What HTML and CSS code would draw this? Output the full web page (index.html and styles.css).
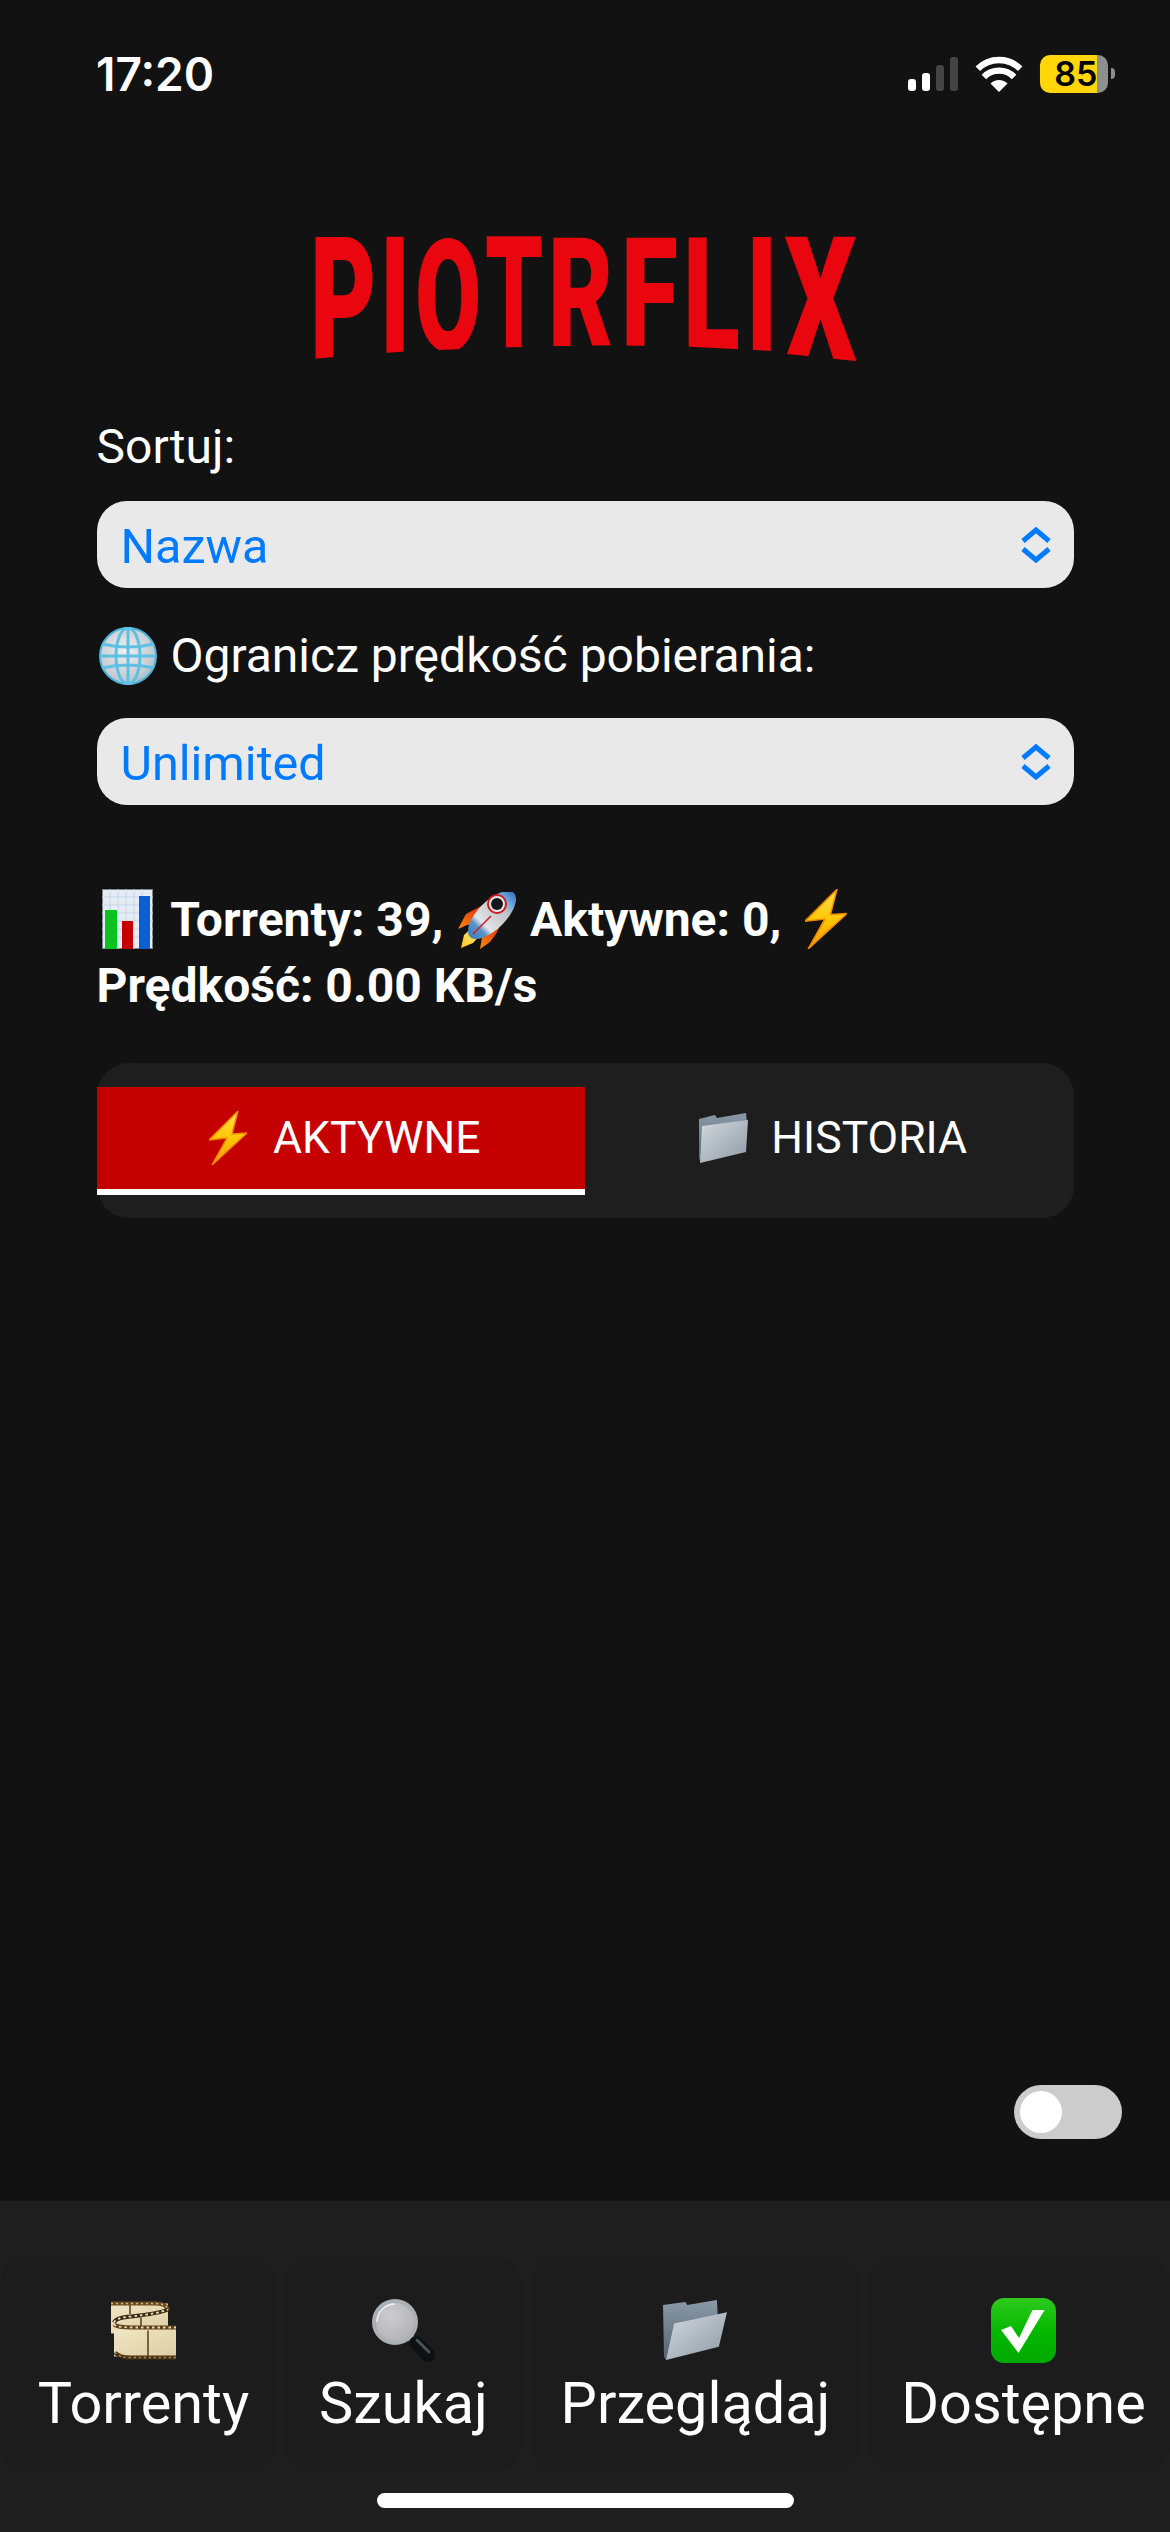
FILE: index.html
```html
<!DOCTYPE html>
<html lang="pl">
<head>
<meta charset="utf-8">
<link rel="stylesheet" href="styles.css">
<title>Piotrflix</title>
</head>
<body>

<!-- emoji sprites -->
<svg class="sprite" xmlns="http://www.w3.org/2000/svg">
  <defs>
    <linearGradient id="g-bolt" x1="0" y1="0" x2="0" y2="1">
      <stop offset="0" stop-color="#ffe14a"/><stop offset="0.55" stop-color="#ffc400"/><stop offset="1" stop-color="#f59a00"/>
    </linearGradient>
    <linearGradient id="g-folder-back" x1="0" y1="0" x2="0" y2="1">
      <stop offset="0" stop-color="#8b9aa8"/><stop offset="1" stop-color="#55636f"/>
    </linearGradient>
    <linearGradient id="g-folder-front" x1="0" y1="0" x2="1" y2="1">
      <stop offset="0" stop-color="#d3d9de"/><stop offset="1" stop-color="#8e9aa6"/>
    </linearGradient>
    <linearGradient id="g-check" x1="0" y1="0" x2="0" y2="1">
      <stop offset="0" stop-color="#2ecb1e"/><stop offset="0.5" stop-color="#05b800"/><stop offset="1" stop-color="#02a800"/>
    </linearGradient>
    <linearGradient id="g-rocket" x1="0" y1="0" x2="1" y2="0">
      <stop offset="0" stop-color="#3f7fc0"/><stop offset="0.2" stop-color="#5b93c8"/><stop offset="0.3" stop-color="#e2e5e8"/><stop offset="0.72" stop-color="#b9c0c6"/><stop offset="0.84" stop-color="#6aa5de"/><stop offset="1" stop-color="#3b78bd"/>
    </linearGradient>
    <linearGradient id="g-fin" x1="1" y1="0" x2="0" y2="1">
      <stop offset="0" stop-color="#d81e0a"/><stop offset="1" stop-color="#ff8a10"/>
    </linearGradient>
    <linearGradient id="g-flame" x1="1" y1="0" x2="0" y2="1">
      <stop offset="0" stop-color="#f58a10"/><stop offset="0.6" stop-color="#ffdc50"/><stop offset="1" stop-color="#ffc020"/>
    </linearGradient>
    <linearGradient id="g-film" x1="0" y1="0" x2="1" y2="1">
      <stop offset="0" stop-color="#f1e6c4"/><stop offset="1" stop-color="#ddcea4"/>
    </linearGradient>
    <radialGradient id="g-globe" cx="0.45" cy="0.4" r="0.7">
      <stop offset="0" stop-color="#eef0f1"/><stop offset="0.7" stop-color="#c5ccd1"/><stop offset="1" stop-color="#8ab2c6"/>
    </radialGradient>
    <radialGradient id="g-lens" cx="0.4" cy="0.35" r="0.8">
      <stop offset="0" stop-color="#cdcdcf"/><stop offset="1" stop-color="#adadaf"/>
    </radialGradient>

    <symbol id="e-chart" viewBox="0 0 51 60">
      <rect x="0.5" y="0.5" width="50" height="59" fill="#e6edf5" stroke="#7d838a"/>
      <path d="M0 8H51M0 16H51M0 24H51M0 32H51M0 40H51M0 48H51M8 0V60M16 0V60M24 0V60M32 0V60M40 0V60" stroke="#c5d6ea" stroke-width="1"/>
      <rect x="3" y="21" width="12" height="39" fill="#0cc21f"/>
      <rect x="20" y="32" width="11" height="28" fill="#c40000"/>
      <rect x="37" y="7" width="11" height="53" fill="#0a5fd0"/>
    </symbol>

    <symbol id="e-rocket" viewBox="0 0 58 57">
      <path d="M0 37 L8 22 L27 12 L20 32 L9 33 Z" fill="url(#g-fin)"/>
      <path d="M22 57 L25 40 L44 30 L38 42 L32 50 Z" fill="url(#g-fin)"/>
      <path d="M3 56 L6 43 L18 32 L25 40 L15 51 Z" fill="url(#g-flame)"/>
      <ellipse cx="34" cy="23" rx="31" ry="14" transform="rotate(-45 34 23)" fill="url(#g-rocket)"/>
      <path d="M15 42 L33 24" stroke="#c8202a" stroke-width="1.6"/>
      <circle cx="39" cy="12" r="9" fill="#e8eaec" stroke="#d01a1e" stroke-width="2"/>
      <circle cx="39" cy="12" r="6" fill="#151618"/>
    </symbol>

    <symbol id="e-bolt" viewBox="0 0 38 54">
      <path d="M29 0 L0 29 L18 27 L3 54 L38 22 L23 23 Z" fill="url(#g-bolt)" stroke="#ee8a00" stroke-width="1.4" stroke-linejoin="round"/>
    </symbol>

    <symbol id="e-globe" viewBox="0 0 58 58">
      <circle cx="29" cy="29" r="28" fill="url(#g-globe)" stroke="#4fb3d9" stroke-width="2"/>
      <g fill="none" stroke="#5fc0e4" stroke-width="3">
        <ellipse cx="29" cy="29" rx="12" ry="28"/>
        <path d="M29 1V57M3 17Q29 23 55 17M1 29H57M3 41Q29 35 55 41"/>
      </g>
    </symbol>

    <symbol id="e-folder-tab" viewBox="0 0 49 50">
      <path d="M0 6 L16 2 L18 5 L47 0 L48 10 L3 49 L0 46 Z" fill="url(#g-folder-back)"/>
      <path d="M3 13 L49 7 L47 39 L1 50 Z" fill="url(#g-folder-front)"/>
    </symbol>

    <symbol id="e-folder" viewBox="0 0 64 60">
      <path d="M0 5 L22 2 L24 5 L53 0 L54 16 L3 59 L1 56 Z" fill="url(#g-folder-back)"/>
      <path d="M11 23 L63 12 L55 46 L3 59 Z" fill="url(#g-folder-front)"/>
    </symbol>

    <symbol id="e-film" viewBox="0 0 65 60">
      <rect x="0" y="3" width="57" height="30" fill="url(#g-film)"/>
      <rect x="3" y="28" width="62" height="28" fill="url(#g-film)"/>
      <path d="M19 3V14M30 17V28M37 30V56" stroke="#4a3213" stroke-width="1.4"/>
      <g fill="none">
        <path d="M0 3 H44 Q56 3 57 10" stroke="#6b4d20" stroke-width="4"/>
        <path d="M0 3 H44 Q56 3 57 10" stroke="#cdbb8c" stroke-width="1.5" stroke-dasharray="2 3"/>
        <path d="M3 22 Q5 17 20 16 Q48 13 57 9" stroke="#3a2a12" stroke-width="4"/>
        <path d="M3 22 Q5 17 20 16 Q48 13 57 9" stroke="#f0e6c4" stroke-width="1.8" stroke-dasharray="2.5 3"/>
        <path d="M3 24 Q6 27 22 27 H65" stroke="#5a4119" stroke-width="4"/>
        <path d="M3 24 Q6 27 22 27 H65" stroke="#e8dcb4" stroke-width="1.8" stroke-dasharray="2.5 3"/>
        <path d="M4 52 Q8 57 20 57 H65" stroke="#4a3414" stroke-width="4"/>
        <path d="M4 52 Q8 57 20 57 H65" stroke="#a68f60" stroke-width="1.5" stroke-dasharray="2 3"/>
      </g>
    </symbol>

    <symbol id="e-search" viewBox="0 0 65 65">
      <path d="M38 38 L50 50" stroke="#8d949a" stroke-width="7"/>
      <path d="M45 45 L57 57" stroke="#0e1114" stroke-width="14" stroke-linecap="round"/>
      <path d="M46 42 L58 54" stroke="#4a5258" stroke-width="3" stroke-linecap="round"/>
      <circle cx="24" cy="24" r="21" fill="url(#g-lens)" stroke="#a9b0b6" stroke-width="4"/>
      <path d="M6 24 A18 18 0 0 1 24 6" fill="none" stroke="#eef0f2" stroke-width="1.5"/>
    </symbol>

    <symbol id="e-check" viewBox="0 0 65 65">
      <rect width="65" height="65" rx="13" fill="url(#g-check)"/>
      <path d="M10 32 L20 28 L28 40 L41.5 12 L53.6 12 L27.5 55 Z" fill="#fff"/>
    </symbol>

    <symbol id="chevrons" viewBox="0 0 32 36">
      <path d="M3 14 L16 3 L29 14M3 22 L16 33 L29 22" fill="none" stroke="#007aff" stroke-width="5"/>
    </symbol>

    <clipPath id="logo-curve">
      <path d="M0 0H560V130L550 129L480 121.7L467 119L435 117.3L385 114.7L320 113.4L240 114.7L180 116L100 119.4L80 121L30 125L0 127.5Z"/>
    </clipPath>
  </defs>
</svg>

<header class="status-bar">
  <span class="status-time">17:20</span>
  <div class="status-icons">
    <div class="signal">
      <span class="bar bar-1"></span>
      <span class="bar bar-2"></span>
      <span class="bar bar-3"></span>
      <span class="bar bar-4"></span>
    </div>
    <svg class="wifi" viewBox="0 0 48 36">
      <path d="M24 36 L15.5 27.5 A12 12 0 0 1 32.5 27.5 Z" fill="#fff"/>
      <path d="M8.9 20.9 A21.4 21.4 0 0 1 39.1 20.9M2.8 12.8 A30 30 0 0 1 45.2 12.8" fill="none" stroke="#fff" stroke-width="6.4"/>
    </svg>
    <div class="battery"><span class="battery-level">85</span></div>
  </div>
</header>

<main class="content">
  <svg class="logo" viewBox="0 0 560 130">
    <g clip-path="url(#logo-curve)">
      <text class="logo-letter" transform="translate(5 127.5) scale(1.02 1.727)">P</text>
      <text class="logo-letter" transform="translate(75 121) scale(1 1.636)">I</text>
      <text class="logo-letter" transform="translate(110 118) scale(0.96 1.55)">O</text>
      <text class="logo-letter" transform="translate(180 115) scale(0.92 1.551)">T</text>
      <text class="logo-letter" transform="translate(243 113.5) scale(1 1.53)">R</text>
      <text class="logo-letter" transform="translate(316 113.5) scale(1.04 1.53)">F</text>
      <text class="logo-letter" transform="translate(378 117.5) scale(1.05 1.586)">L</text>
      <text class="logo-letter" transform="translate(441 120) scale(1.05 1.622)">I</text>
      <text class="logo-letter" transform="translate(479 129) scale(1.14 1.748)">X</text>
    </g>
  </svg>

  <label class="field-label field-label-first">Sortuj:</label>
  <div class="select">
    <span>Nazwa</span>
    <svg class="select-arrows"><use href="#chevrons"/></svg>
  </div>

  <label class="field-label"><svg class="emoji emoji-globe"><use href="#e-globe"/></svg> Ogranicz prędkość pobierania:</label>
  <div class="select">
    <span>Unlimited</span>
    <svg class="select-arrows"><use href="#chevrons"/></svg>
  </div>

  <p class="stats">
    <svg class="emoji emoji-chart"><use href="#e-chart"/></svg> Torrenty: 39, <svg class="emoji emoji-rocket"><use href="#e-rocket"/></svg> Aktywne: 0, <svg class="emoji emoji-bolt"><use href="#e-bolt"/></svg><br>
    Prędkość: 0.00 KB/s
  </p>

  <div class="tabs">
    <div class="tab tab-active">
      <svg class="tab-icon tab-icon-bolt"><use href="#e-bolt"/></svg>
      <span>AKTYWNE</span>
    </div>
    <div class="tab">
      <svg class="tab-icon tab-icon-folder"><use href="#e-folder-tab"/></svg>
      <span>HISTORIA</span>
    </div>
  </div>
</main>

<div class="toggle-row">
  <div class="toggle"><span class="toggle-knob"></span></div>
</div>

<nav class="bottom-nav">
  <div class="nav-items">
    <a class="nav-item"><svg class="nav-icon"><use href="#e-film"/></svg><span>Torrenty</span></a>
    <a class="nav-item"><svg class="nav-icon"><use href="#e-search"/></svg><span>Szukaj</span></a>
    <a class="nav-item"><svg class="nav-icon"><use href="#e-folder"/></svg><span>Przeglądaj</span></a>
    <a class="nav-item"><svg class="nav-icon"><use href="#e-check"/></svg><span>Dostępne</span></a>
  </div>
  <div class="home-indicator"></div>
</nav>

</body>
</html>
```

FILE: styles.css
```css
html, body { margin: 0; padding: 0; }

body {
  width: 1170px;
  height: 2532px;
  overflow: hidden;
  display: flex;
  flex-direction: column;
  background: #121212;
  color: #fff;
  font-family: Roboto, "Noto Sans", sans-serif;
}

.sprite { position: absolute; width: 0; height: 0; }

/* status bar */
.status-bar {
  flex: none;
  height: 148px;
  display: flex;
  align-items: center;
  justify-content: space-between;
  padding: 0 55px 0 96px;
  box-sizing: border-box;
}
.status-time {
  font-family: Inter, Roboto, sans-serif;
  font-size: 46px;
  font-weight: 600;
}
.status-icons { display: flex; align-items: center; gap: 17px; }
.signal { display: flex; align-items: flex-end; gap: 5.5px; height: 34px; }
.bar { width: 8.5px; border-radius: 3px; background: #fff; }
.bar-1 { height: 12px; }
.bar-2 { height: 18px; }
.bar-3 { height: 26px; background: #444; }
.bar-4 { height: 34px; background: #444; }
.wifi { width: 48px; height: 36px; }
.battery {
  position: relative;
  width: 68px;
  height: 38px;
  margin-right: 7px;
  border-radius: 10px;
  background: linear-gradient(to right, #ffd60a 0, #ffd60a 57.5px, #8e8e8e 57.5px);
}
.battery::after {
  content: "";
  position: absolute;
  right: -7px;
  top: 13px;
  width: 4px;
  height: 11px;
  border-radius: 0 6px 6px 0;
  background: #8e8e8e;
}
.battery-level {
  display: block;
  width: 57.5px;
  margin-left: 7px;
  text-align: center;
  color: #000;
  font-family: Inter, Roboto, sans-serif;
  font-size: 34px;
  font-weight: 600;
  line-height: 38px;
}

/* main column */
.content {
  flex: 1;
  padding: 84px 96.5px 0;
  box-sizing: border-box;
}

.logo { display: block; width: 560px; height: 130px; margin: 0 auto; overflow: visible; }
.logo-letter {
  font-family: Roboto, sans-serif;
  font-size: 100px;
  font-weight: 900;
  fill: #e9060f;
}

.field-label {
  display: block;
  margin: 35px 0 29px;
  font-size: 48px;
  line-height: 66px;
}
.field-label-first { margin: 52px 0 21px; }

.select {
  height: 87px;
  box-sizing: border-box;
  display: flex;
  align-items: center;
  justify-content: space-between;
  padding: 0 22px 0 24px;
  border-radius: 30px;
  background: #e9e9e9;
  color: #007aff;
  font-size: 48.5px;
}
.select span { padding-top: 3px; }
.select-arrows { width: 32px; height: 36px; }

.emoji { vertical-align: -13px; }
.emoji-globe { width: 58px; height: 58px; margin: 0 2px 0 2px; }
.emoji-chart { width: 51px; height: 60px; margin: 0 7px 0 5px; }
.emoji-rocket { width: 58px; height: 57px; margin: 0 2px 0 3px; }
.emoji-bolt { width: 42px; height: 60px; margin-left: 12px; }

.stats {
  margin: 82px 0 44px;
  font-size: 48px;
  font-weight: 700;
  line-height: 66px;
}

/* tabs */
.tabs {
  display: flex;
  padding: 24px 0 23px;
  border-radius: 32px;
  background: #1e1e1e;
}
.tab {
  flex: 1;
  height: 108px;
  box-sizing: border-box;
  display: flex;
  align-items: center;
  justify-content: center;
  gap: 26px;
  font-size: 44.5px;
  padding: 0 0 6px 8px;
}
.tab-active { background: #c40000; border-bottom: 6px solid #fff; padding-bottom: 0; }
.tab-icon-bolt { width: 38px; height: 54px; }
.tab-icon-folder { width: 49px; height: 50px; margin-right: -3px; }

/* floating switch */
.toggle-row {
  flex: none;
  display: flex;
  justify-content: flex-end;
  padding: 0 48px 62px 0;
}
.toggle {
  width: 108px;
  height: 54px;
  padding: 6px;
  box-sizing: border-box;
  border-radius: 27px;
  background: #ccc;
}
.toggle-knob { display: block; width: 42px; height: 42px; border-radius: 50%; background: #fff; }

/* bottom navigation */
.bottom-nav {
  flex: none;
  height: 331px;
  padding-top: 54px;
  box-sizing: border-box;
  background: #1e1e1e;
}
.nav-items {
  display: grid;
  grid-template-columns: 277px 237px 331px 1fr;
  gap: 8px;
  height: 218px;
}
.nav-item {
  display: flex;
  flex-direction: column;
  align-items: center;
  gap: 8px;
  padding-top: 43px;
  box-sizing: border-box;
  border-radius: 30px;
  background: #1c1c1c;
  font-size: 57.6px;
  line-height: 66px;
  white-space: nowrap;
}
.nav-item:first-child { padding-left: 10px; }
.nav-item:last-child { padding-left: 8px; }
.nav-icon { width: 65px; height: 65px; flex: none; }

.home-indicator {
  width: 417px;
  height: 15px;
  margin: 20px auto 0;
  border-radius: 8px;
  background: #fff;
}
```
